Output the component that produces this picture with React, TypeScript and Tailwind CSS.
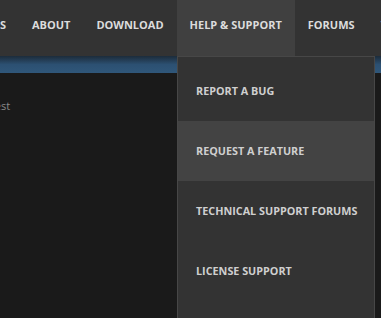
import React from 'react';

const navItems = ['FEATURES', 'ABOUT', 'DOWNLOAD', 'HELP & SUPPORT', 'FORUMS', 'TUTORIALS'];

const supportLinks = [
    'REPORT A BUG',
    'REQUEST A FEATURE',
    'TECHNICAL SUPPORT FORUMS',
    'LICENSE SUPPORT',
];

export default function App() {
    return (
        <div
            className="relative w-[381px] h-[318px] overflow-hidden bg-[#1a1a1a]"
            style={{ fontFamily: '"Open Sans", "Liberation Sans", sans-serif' }}
        >
            {/* top navigation */}
            <nav className="h-[56px] bg-[#333333] flex items-stretch whitespace-nowrap">
                <ul className="flex items-stretch ml-[-61px]">
                    {navItems.map((item) => (
                        <li
                            key={item}
                            className={
                                item === 'HELP & SUPPORT'
                                    ? 'flex items-center pb-[6px] px-[13px] bg-[#404040] text-[11px] font-bold text-[#dcdcdc]'
                                    : 'flex items-center pb-[6px] px-[13px] text-[11px] font-bold text-[#dcdcdc]'
                            }
                        >
                            {item}
                        </li>
                    ))}
                </ul>
            </nav>

            {/* blue stripe */}
            <div className="h-[17px] bg-gradient-to-b from-[#1c2c3b] via-[#2c5072] to-[#30577a]" />

            {/* page content */}
            <div className="pt-[25px] ml-[-21px]">
                <p className="text-[11px] text-[#8a8a8a]">Latest</p>
            </div>

            {/* dropdown */}
            <div className="absolute left-[177px] top-[56px] w-[198px] h-[270px] bg-[#333333] border border-[#474747] pt-[4px]">
                <ul>
                    {supportLinks.map((link) => (
                        <li
                            key={link}
                            className={
                                link === 'REQUEST A FEATURE'
                                    ? 'h-[60px] flex items-center pl-[18px] bg-[#434343] text-[10.8px] font-bold text-[#cfcfcf]'
                                    : 'h-[60px] flex items-center pl-[18px] text-[10.8px] font-bold text-[#cfcfcf]'
                            }
                        >
                            {link}
                        </li>
                    ))}
                </ul>
            </div>
        </div>
    );
}
